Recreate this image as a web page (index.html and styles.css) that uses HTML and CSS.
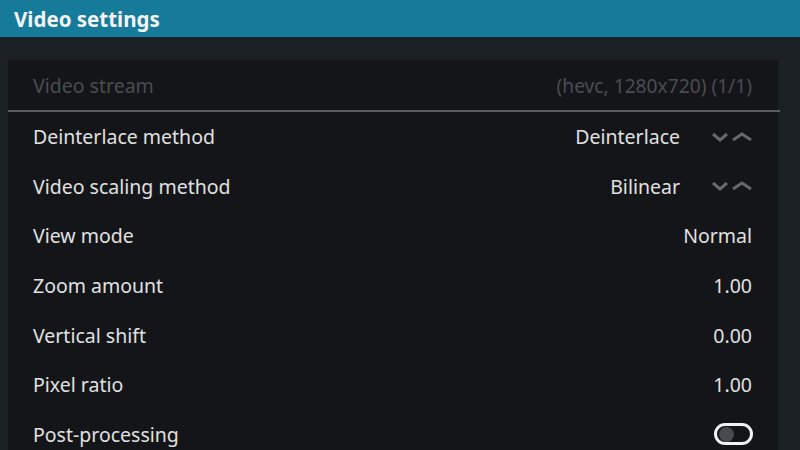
FILE: index.html
```html
<!DOCTYPE html>
<html lang="en">
<head>
  <meta charset="UTF-8" />
  <title>Video settings</title>
  <link rel="stylesheet" href="styles.css">
</head>
<body>
  <div class="header">
    <h1>Video settings</h1>
  </div>

  <div class="panel">
    <!-- disabled info row -->
    <div class="row disabled">
      <span class="label">Video stream</span>
      <span class="value">(hevc, 1280x720) (1/1)</span>
    </div>
    <div class="divider"></div>

    <div class="row">
      <span class="label">Deinterlace method</span>
      <span class="value">Deinterlace</span>
      <span class="spin">
        <svg width="40" height="10" viewBox="0 0 40 10">
          <path d="M1 2 L8 8 L15 2" />
          <path d="M21 8 L30 2 L39 8" />
        </svg>
      </span>
    </div>
    <div class="row">
      <span class="label">Video scaling method</span>
      <span class="value">Bilinear</span>
      <span class="spin">
        <svg width="40" height="10" viewBox="0 0 40 10">
          <path d="M1 2 L8 8 L15 2" />
          <path d="M21 8 L30 2 L39 8" />
        </svg>
      </span>
    </div>
    <div class="row">
      <span class="label">View mode</span>
      <span class="value">Normal</span>
    </div>
    <div class="row">
      <span class="label">Zoom amount</span>
      <span class="value">1.00</span>
    </div>
    <div class="row">
      <span class="label">Vertical shift</span>
      <span class="value">0.00</span>
    </div>
    <div class="row">
      <span class="label">Pixel ratio</span>
      <span class="value">1.00</span>
    </div>
    <div class="row">
      <span class="label">Post-processing</span>
      <span class="toggle"><span class="knob"></span></span>
    </div>
  </div>
</body>
</html>
```

FILE: styles.css
```css
html, body {
  margin: 0;
  height: 100%;
  overflow: hidden;
}
body {
  font-family: "Noto Sans", sans-serif;
  background: #1b2024;
  color: #e0e0e0;
}
.header {
  height: 37px;
  background: #167a9a;
  padding-left: 14px;
  display: flex;
  align-items: center;
}
.header h1 {
  margin: 0;
  font-size: 20.5px;
  font-weight: bold;
  color: #f4f4f4;
}
.panel {
  margin: 23px 22px 0 8px;
  background: #141519;
  height: 400px;
}
.row {
  height: 49.6px;
  display: flex;
  align-items: center;
  padding: 0 26px 0 25px;
  font-size: 19.5px;
}
.row.disabled {
  height: 50px;
  color: #4a4c51;
}
.row.disabled .value {
  font-size: 19.2px;
}
.label {
  flex: 1;
}
.divider {
  height: 2px;
  background: #5b5d61;
  margin-right: -2px;
}
.spin {
  display: flex;
  margin-left: 32px;
}
.spin svg path {
  fill: none;
  stroke: #66686c;
  stroke-width: 3;
}
.toggle {
  width: 31px;
  height: 16px;
  border: 3px solid #f2f2f2;
  border-radius: 12px;
  display: flex;
  align-items: center;
  padding: 0 0 0 2px;
  margin-right: -1px;
}
.knob {
  width: 15px;
  height: 15px;
  border-radius: 50%;
  background: #4a4a4e;
}
```
